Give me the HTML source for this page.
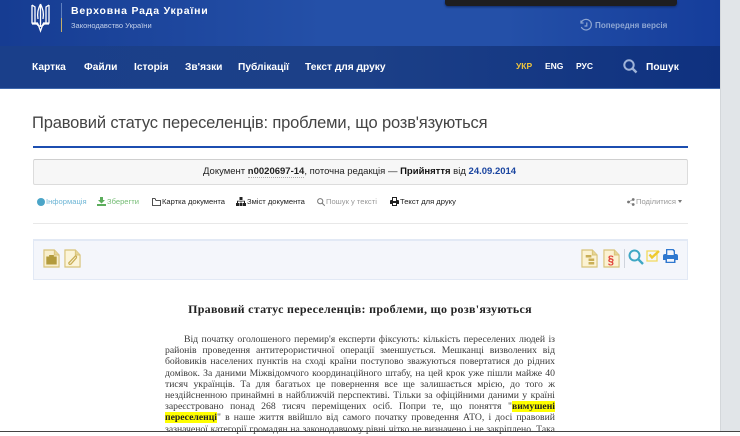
<!DOCTYPE html>
<html><head><meta charset="utf-8"><style>
html,body{margin:0;padding:0;width:740px;height:432px;overflow:hidden;background:#fff;font-family:"Liberation Sans",sans-serif}
.a{position:absolute;white-space:nowrap}
.n{top:61px;font-size:10.200px;font-weight:bold;color:#fff;line-height:14px}
.t{top:196px;font-size:7.600px;line-height:12px;color:#222}
.l{position:absolute;left:165px;width:390px;height:12px;overflow:hidden;font:9.700px/11.200px "Liberation Serif",serif;color:#3a3a3a;text-align:justify;text-align-last:justify}
svg{position:absolute;overflow:visible}
</style></head><body>
<div class="a" style="left:0;top:0;width:720px;height:46px;background:linear-gradient(90deg,#163c92 0%,#2450a8 45%,#2450a8 70%,#153d9b 100%)"></div>
<div class="a" style="left:0;top:46px;width:720px;height:42px;background:linear-gradient(90deg,#1a3f8a 0%,#1c4088 50%,#0f317f 100%);border-bottom:1px solid #3f68ad"></div>
<div class="a" style="left:720px;top:0;width:20px;height:432px;background:#e1e5e8;border-left:1px solid #d3d7da;box-sizing:border-box"></div>
<div class="a" style="left:445px;top:0;width:232px;height:6px;background:#1e1e20;border-radius:0 0 3px 3px;box-shadow:0 1px 2px #0f2a66"></div>

<svg style="left:31px;top:3px" width="19" height="29" viewBox="0 0 19 29" fill="none" stroke="#fff" stroke-width="1.300"><path d="M1 2 L4 4 V20 H7 M18 2 L15 4 V20 H12 M1 2 V20 H4 M18 2 V20 H15 M9.500 1 V24 M9.500 1 C7 6 6 10 7 16 M9.500 1 C12 6 13 10 12 16 M1 21 H7 L9.500 28 L12 21 H18 M5 20 C7 24 12 24 14 20"/></svg>
<div class="a" style="left:61px;top:3px;width:1px;height:16px;background:#5f80c0"></div>
<div class="a" style="left:61px;top:18px;width:1px;height:14px;background:#c4ae6a"></div>
<div class="a" style="left:71px;top:4px;font-size:10.500px;font-weight:bold;letter-spacing:.8px;color:#fff;line-height:14px">Верховна Рада України</div>
<div class="a" style="left:71px;top:20px;font-size:7.500px;color:#c3d0ea;line-height:11px">Законодавство України</div>

<svg style="left:580px;top:19px" width="13" height="13" viewBox="0 0 13 13" fill="none" stroke="#8ea6d2" stroke-width="1.200"><path d="M1.500 3 A5.300 5.300 0 1 1 1.300 8 M1 1.500 V4 H3.500 M6.800 3.500 V7 H4.500"/></svg>
<div class="a" style="left:595px;top:20px;font-size:8.100px;font-weight:bold;color:#8ea6d2;line-height:12px">Попередня версія</div>

<div class="a n" style="left:32px">Картка</div>
<div class="a n" style="left:84px">Файли</div>
<div class="a n" style="left:134px">Історія</div>
<div class="a n" style="left:185px">Зв'язки</div>
<div class="a n" style="left:238px">Публікації</div>
<div class="a n" style="left:305px">Текст для друку</div>
<div class="a" style="left:516px;top:60px;font-size:8.500px;font-weight:bold;color:#f0c53c;line-height:12px">УКР</div>
<div class="a" style="left:545px;top:60px;font-size:8.500px;font-weight:bold;color:#fff;line-height:12px">ENG</div>
<div class="a" style="left:576px;top:60px;font-size:8.500px;font-weight:bold;color:#fff;line-height:12px">РУС</div>
<svg style="left:623px;top:59px" width="15" height="15" viewBox="0 0 15 15" fill="none" stroke="#9fb3d8" stroke-width="2"><circle cx="6" cy="6" r="4.700"/><path d="M9.500 9.500 L13.500 13.500" stroke-width="2.400"/></svg>
<div class="a n" style="left:646px">Пошук</div>

<div class="a" style="left:32px;top:112px;font-size:16.500px;letter-spacing:-.16px;color:#444;line-height:22px">Правовий статус переселенців: проблеми, що розв'язуються</div>
<div class="a" style="left:33px;top:146px;width:655px;height:2px;background:#1c4eb0"></div>

<div class="a" style="left:33px;top:159px;width:655px;height:26px;box-sizing:border-box;background:#f7f7f7;border:1px solid #dcdcdc;border-top-color:#cfcfcf;border-radius:2px"></div>
<div class="a" style="left:203px;top:165px;font-size:9.500px;color:#222;line-height:14px">Документ <b style="border-bottom:1px dotted #aaa">n0020697-14</b>, поточна редакція — <b style="color:#111">Прийняття</b> від <b style="color:#1a45a0">24.09.2014</b></div>

<div class="a" style="left:37px;top:198px;width:8px;height:8px;border-radius:50%;background:#4ba5c8"></div>
<div class="a t" style="left:46px;color:#6eb6d6">Інформація</div>
<svg style="left:97px;top:197px" width="9" height="9" viewBox="0 0 9 9" fill="#5cad5c"><path d="M3 0 H6 V3 H8 L4.500 6.500 L1 3 H3 Z M0 7 H9 V9 H0 Z"/></svg>
<div class="a t" style="left:107px;color:#74bc74">Зберегти</div>
<svg style="left:152px;top:198px" width="9" height="8" viewBox="0 0 9 8" fill="none" stroke="#222" stroke-width=".8"><path d="M.5 1.500 V7.500 H8.500 V2.500 H4 L3 .5 H.5 Z"/></svg>
<div class="a t" style="left:162px">Картка документа</div>
<svg style="left:236px;top:197px" width="10" height="9" viewBox="0 0 10 9" fill="#222"><path d="M3.500 0 H6.500 V3 H3.500 Z M0 6 H3 V9 H0 Z M3.500 6 H6.500 V9 H3.500 Z M7 6 H10 V9 H7 Z M1 3.800 H9 V6 H8 V4.500 H5.300 V6 H4.700 V4.500 H2 V6 H1 Z"/></svg>
<div class="a t" style="left:247px">Зміст документа</div>
<svg style="left:317px;top:198px" width="8" height="8" viewBox="0 0 8 8" fill="none" stroke="#777" stroke-width="1"><circle cx="3.200" cy="3.200" r="2.600"/><path d="M5 5 L7.800 7.800"/></svg>
<div class="a t" style="left:326px;color:#999">Пошук у тексті</div>
<svg style="left:390px;top:197px" width="9" height="9" viewBox="0 0 9 9" fill="#222"><path d="M2 0 H7 V3 H8 Q9 3 9 4 V7 H7 V9 H2 V7 H0 V4 Q0 3 1 3 H2 Z M3 1 V4 H6 V1 Z M3 6 V8 H6 V6 Z"/></svg>
<div class="a t" style="left:400px">Текст для друку</div>
<svg style="left:627px;top:198px" width="8" height="8" viewBox="0 0 8 8" fill="#777"><circle cx="1.500" cy="4" r="1.400"/><circle cx="6.200" cy="1.500" r="1.400"/><circle cx="6.200" cy="6.500" r="1.400"/><path d="M1.500 3.600 L6 1.200 V1.800 L1.500 4.400 L6 6.200 V6.800 L1.500 4.400 Z"/></svg>
<div class="a t" style="left:636px;color:#999">Поділитися</div>
<div class="a" style="left:678px;top:200px;width:0;height:0;border:2.500px solid transparent;border-top:3px solid #777"></div>

<div class="a" style="left:33px;top:223px;width:655px;height:1px;background:#e8e8e8"></div>

<div class="a" style="left:33px;top:239px;width:655px;height:41px;box-sizing:border-box;background:#f4f6fb;border:1px solid #e2e9f5;border-top-width:2px"></div>

<svg style="left:43px;top:249px" width="17" height="19" viewBox="0 0 18 19" preserveAspectRatio="none"><path d="M1 1 H12 L17 6 V18 H1 Z" fill="#f8efcd" stroke="#d8c278" stroke-width="1.200"/><path d="M12 1 V6 H17" fill="#e6d595" stroke="#d8c278"/><path d="M4 8 H14 V15 H4 Z M7 8 V6.500 H11 V8" fill="#b39b3c" stroke="#b39b3c"/></svg>
<svg style="left:64px;top:249px" width="17" height="19" viewBox="0 0 18 19" preserveAspectRatio="none"><path d="M1 1 H12 L17 6 V18 H1 Z" fill="#fbf4d8" stroke="#d8c278" stroke-width="1.200"/><path d="M12 1 V6 H17" fill="#e6d595" stroke="#d8c278"/><path d="M5 14 L12 7 Q14 7 13 9 L7.500 15 Q5 16 5 14 Z" fill="none" stroke="#c9ae56" stroke-width="1.300"/></svg>

<svg style="left:581px;top:249px" width="17" height="19" viewBox="0 0 18 19" preserveAspectRatio="none"><path d="M1 1 H12 L17 6 V18 H1 Z" fill="#fbf2d2" stroke="#d8c278" stroke-width="1.200"/><path d="M12 1 V6 H17" fill="#e6d595" stroke="#d8c278"/><path d="M5 6 H11 V8.500 H5 Z M8 9.500 H14 V12 H8 Z M8 13 H14 V15.500 H8 Z" fill="#c9ae56"/></svg>
<svg style="left:603px;top:249px" width="17" height="19" viewBox="0 0 18 19" preserveAspectRatio="none"><path d="M1 1 H12 L17 6 V18 H1 Z" fill="#fbf2d2" stroke="#d8c278" stroke-width="1.200"/><path d="M12 1 V6 H17" fill="#e6d595" stroke="#d8c278"/><text x="5" y="15" font-family="Liberation Sans" font-size="12" font-weight="bold" fill="#e0413a">§</text></svg>
<div class="a" style="left:624px;top:249px;width:1px;height:19px;background:#cfd4dc"></div>
<svg style="left:628px;top:249px" width="16" height="16" viewBox="0 0 16 16" fill="none" stroke="#3ea7c4" stroke-width="2"><circle cx="6.500" cy="6.500" r="5"/><path d="M10.200 10.200 L15 15" stroke-width="2.400"/></svg>
<svg style="left:646px;top:249px" width="14" height="13" viewBox="0 0 14 13" fill="none" stroke="#f2d95c" stroke-width="1.300"><path d="M1 2 H11 V12 H1 Z"/><path d="M3.500 5.500 L6 8.500 L13 2" stroke="#eec92e" stroke-width="2.400"/></svg>
<svg style="left:663px;top:249px" width="15" height="14" viewBox="0 0 15 14" fill="#2f78cf"><path d="M3 0 H10.500 L12 1.500 V5 H13 Q15 5 15 7 V11 H12.500 V14 H2.500 V11 H0 V7 Q0 5 2 5 H3 Z M4.300 1.200 V6 H10.700 V2.500 L9.500 1.200 Z M4 10 V12.800 H11 V10 Z"/></svg>

<div class="a" style="left:0;width:720px;top:301px;text-align:center;font:bold 12px/16px 'Liberation Serif',serif;color:#222;letter-spacing:.3px">Правовий статус переселенців: проблеми, що розв'язуються</div>

<div class="l" style="top:334px;left:184px;width:371px">Від початку оголошеного перемир'я експерти фіксують: кількість переселених людей із</div>
<div class="l" style="top:345.200px">районів проведення антитерористичної операції зменшується. Мешканці визволених від</div>
<div class="l" style="top:356.400px">бойовиків населених пунктів на сході країни поступово зважуються повертатися до рідних</div>
<div class="l" style="top:367.600px">домівок. За даними Міжвідомчого координаційного штабу, на цей крок уже пішли майже 40</div>
<div class="l" style="top:378.800px">тисяч українців. Та для багатьох це повернення все ще залишається мрією, до того ж</div>
<div class="l" style="top:390px">нездійсненною принаймні в найближчій перспективі. Тільки за офіційними даними у країні</div>
<div class="l" style="top:401.200px">зареєстровано понад 268 тисяч переміщених осіб. Попри те, що поняття "<b style="background:#ff0;color:#222">вимушені</b></div>
<div class="l" style="top:412.400px"><b style="background:#ff0;color:#222">переселенці</b>" в наше життя ввійшло від самого початку проведення АТО, і досі правовий статус</div>
<div class="l" style="top:423.600px">зазначеної категорії громадян на законодавчому рівні чітко не визначено і не закріплено. Така</div>
<div class="a" style="left:0;top:431px;width:740px;height:1px;background:#444"></div>
</body></html>
